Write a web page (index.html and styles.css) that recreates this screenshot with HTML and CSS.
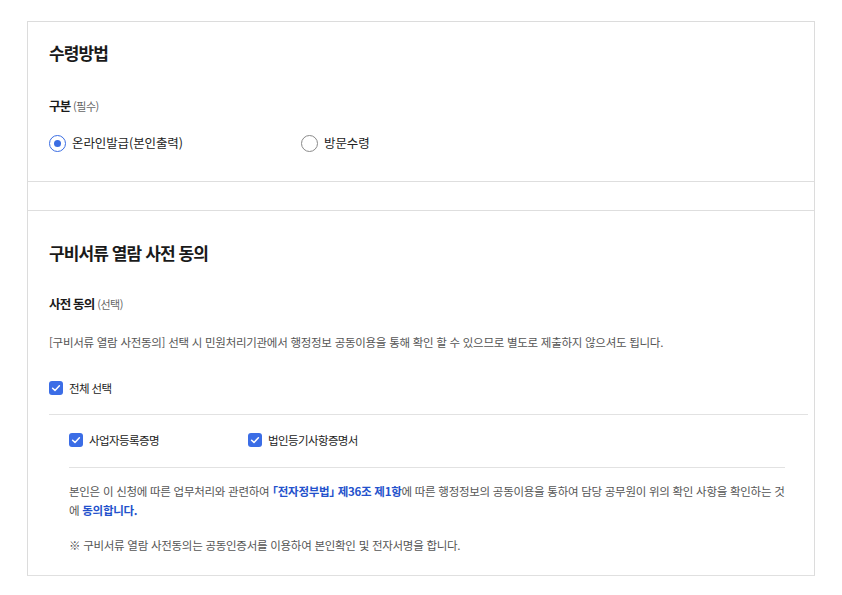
FILE: index.html
```html
<!DOCTYPE html>
<html lang="ko">
<head>
<meta charset="utf-8">
<link rel="stylesheet" href="styles.css">
</head>
<body>
<div class="panel">
  <section class="sec sec-first">
    <h2 class="title">수령방법</h2>
    <div class="field-label">구분 <span class="sub">(필수)</span></div>
    <div class="radio-row">
      <label class="radio radio-on"><span class="dot"></span><span class="rtext">온라인발급(본인출력)</span></label>
      <label class="radio"><span class="dot"></span><span class="rtext">방문수령</span></label>
    </div>
  </section>
  <div class="band"></div>
  <section class="sec sec-second">
    <h2 class="title">구비서류 열람 사전 동의</h2>
    <div class="field-label field-label-2">사전 동의 <span class="sub">(선택)</span></div>
    <p class="desc">[구비서류 열람 사전동의] 선택 시 민원처리기관에서 행정정보 공동이용을 통해 확인 할 수 있으므로 별도로 제출하지 않으셔도 됩니다.</p>
    <div class="check check-all"><span class="box"><svg viewBox="0 0 14 14" width="14" height="14"><path d="M3.6 7.2 L6 9.4 L10.4 4.8" fill="none" stroke="#fff" stroke-width="1.5" stroke-linecap="round" stroke-linejoin="round"/></svg></span><span class="ctext">전체 선택</span></div>
    <div class="rule"></div>
    <div class="inner">
      <div class="check-row">
        <div class="check check-a"><span class="box"><svg viewBox="0 0 14 14" width="14" height="14"><path d="M3.6 7.2 L6 9.4 L10.4 4.8" fill="none" stroke="#fff" stroke-width="1.5" stroke-linecap="round" stroke-linejoin="round"/></svg></span><span class="ctext">사업자등록증명</span></div>
        <div class="check"><span class="box"><svg viewBox="0 0 14 14" width="14" height="14"><path d="M3.6 7.2 L6 9.4 L10.4 4.8" fill="none" stroke="#fff" stroke-width="1.5" stroke-linecap="round" stroke-linejoin="round"/></svg></span><span class="ctext">법인등기사항증명서</span></div>
      </div>
      <div class="rule rule-inner"></div>
      <p class="agree">본인은 이 신청에 따른 업무처리와 관련하여 <strong class="blue"><span class="br">「</span>전자정부법<span class="br">」</span> 제36조 제1항</strong>에 따른 행정정보의 공동이용을 통하여 담당 공무원이 위의 확인 사항을 확인하는 것에 <strong class="blue">동의합니다.</strong></p>
      <p class="note">※ 구비서류 열람 사전동의는 공동인증서를 이용하여 본인확인 및 전자서명을 합니다.</p>
    </div>
  </section>
</div>
</body>
</html>
```

FILE: styles.css
```css
* { box-sizing: border-box; }
html, body { margin: 0; padding: 0; background: #fff; }
body {
  font-family: "Noto Sans CJK KR", "Noto Sans", sans-serif;
  color: #222;
}
.panel {
  margin: 21px 0 0 27px;
  width: 788px;
  border: 1px solid #dcdcdc;
  border-bottom-color: #e0e0e0;
}
.sec { padding: 0 6px 0 21px; }
.sec-first { padding-top: 19px; padding-bottom: 28px; border-bottom: 1px solid #dedede; }
.band { height: 28px; }
.sec-second { padding-top: 30px; padding-bottom: 21px; border-top: 1px solid #dedede; }
.title {
  margin: 0;
  font-size: 17px;
  line-height: 24px;
  font-weight: 700;
  letter-spacing: -0.9px;
  color: #1a1a1a;
}
.field-label {
  margin-top: 32px;
  font-size: 12.5px;
  line-height: 18px;
  font-weight: 700;
  letter-spacing: -0.8px;
  color: #1a1a1a;
}
.field-label-2 { margin-top: 30px; }
.sub { font-size: 11px; font-weight: 400; color: #666; letter-spacing: -0.5px; }
.radio-row { display: flex; margin-top: 18px; height: 20px; align-items: center; }
.radio { display: flex; align-items: center; width: 252px; }
.radio .dot {
  width: 17px; height: 17px; border-radius: 50%;
  border: 1px solid #8a8a8a; flex: none; position: relative; background: #fff;
}
.radio-on .dot { border: 1.5px solid #3a6de3; }
.radio-on .dot::after {
  content: ""; position: absolute; left: 50%; top: 50%;
  width: 7px; height: 7px; margin: -3.5px 0 0 -3.5px;
  border-radius: 50%; background: #3a6de3;
}
.rtext {
  margin-left: 6px;
  font-size: 12.5px; line-height: 18px; letter-spacing: -0.1px; color: #222;
}
.desc {
  margin: 20px 0 0;
  font-size: 11.5px; line-height: 18px; letter-spacing: -0.27px; color: #555;
}
.check { display: flex; align-items: center; height: 18px; }
.check-all { margin-top: 28px; }
.box {
  width: 14px; height: 14px; border-radius: 3px; background: #3b6de6;
  display: flex; flex: none;
}
.ctext { margin-left: 6px; font-size: 11.5px; line-height: 18px; letter-spacing: -0.6px; color: #222; }
.rule { height: 1px; background: #e2e2e2; margin-top: 17px; }
.inner { margin-left: 20px; width: 716px; }
.check-row { display: flex; margin-top: 16px; }
.check-a { width: 179px; }
.rule-inner { margin-top: 18px; }
.agree {
  margin: 14px 0 0;
  font-size: 11.5px; line-height: 19px; letter-spacing: -0.27px; color: #555;
}
.br { font-feature-settings: "halt" 1; }
.blue { color: #2452cc; font-weight: 700; }
.note {
  margin: 16px 0 0;
  font-size: 11.5px; line-height: 18px; letter-spacing: -0.27px; color: #555;
}
```
